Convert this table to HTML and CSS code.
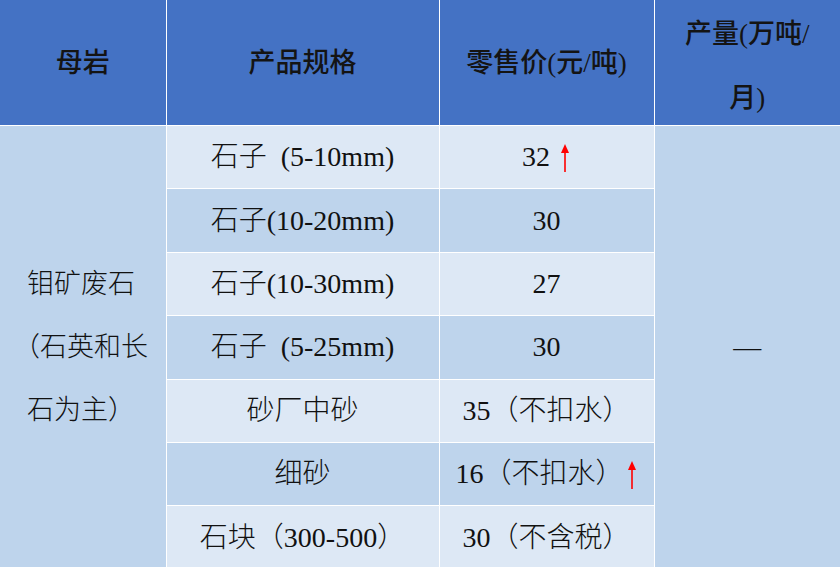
FILE: index.html
```html
<!DOCTYPE html>
<html lang="zh-CN">
<head>
<meta charset="utf-8">
<title>钼矿废石价格</title>
<link rel="stylesheet" href="styles.css">
</head>
<body>
<table class="price-table">
  <colgroup>
    <col class="c1"><col class="c2"><col class="c3"><col class="c4">
  </colgroup>
  <thead>
    <tr>
      <th>母岩</th>
      <th>产品规格</th>
      <th>零售价(元/吨)</th>
      <th class="two-line"><div class="two-line-text">产量(万吨/<br>月)</div></th>
    </tr>
  </thead>
  <tbody>
    <tr class="light">
      <td class="rock" rowspan="7">钼矿废石<br><span class="lead-paren">（</span>石英和长<br>石为主）</td>
      <td>石子&nbsp;&nbsp;(5-10mm)</td>
      <td>32 <svg class="up" width="12" height="28" viewBox="0 0 12 28"><path d="M6 0 L2 9 L10 9 Z" fill="#ff0000"/><line x1="6" y1="7" x2="6" y2="28" stroke="#ff0000" stroke-width="1.6"/></svg></td>
      <td class="output" rowspan="7">—</td>
    </tr>
    <tr class="dark">
      <td>石子(10-20mm)</td>
      <td>30</td>
    </tr>
    <tr class="light">
      <td>石子(10-30mm)</td>
      <td>27</td>
    </tr>
    <tr class="dark">
      <td>石子&nbsp;&nbsp;(5-25mm)</td>
      <td>30</td>
    </tr>
    <tr class="light">
      <td>砂厂中砂</td>
      <td>35（不扣水）</td>
    </tr>
    <tr class="dark">
      <td>细砂</td>
      <td>16（不扣水）<svg class="up" width="12" height="28" viewBox="0 0 12 28"><path d="M6 0 L2 9 L10 9 Z" fill="#ff0000"/><line x1="6" y1="7" x2="6" y2="28" stroke="#ff0000" stroke-width="1.6"/></svg></td>
    </tr>
    <tr class="light">
      <td>石块（300-500）</td>
      <td>30（不含税）</td>
    </tr>
  </tbody>
</table>
</body>
</html>
```
FILE: styles.css
```css
html, body {
  margin: 0;
  padding: 0;
  background: #ffffff;
}

.price-table {
  width: 840px;
  table-layout: fixed;
  border-collapse: collapse;
  font-family: "Liberation Serif", "Noto Sans CJK SC", serif;
  font-size: 28px;
  color: #111111;
}

.c1 { width: 166px; }
.c2 { width: 273px; }
.c3 { width: 215px; }
.c4 { width: 186px; }

.price-table th,
.price-table td {
  border: 1px solid #ffffff;
  padding: 0;
  text-align: center;
  vertical-align: middle;
}

.price-table tr > :first-child { border-left: none; }
.price-table tr > :last-child { border-right: none; }
.price-table thead th { border-top: none; }

.price-table thead th {
  background: #4472c4;
  height: 123px;
  font-weight: 500;
  font-size: 27px;
  color: #141414;
  line-height: 40px;
}

.two-line-text {
  line-height: 64px;
  height: 123px;
  margin-top: 2px;
  overflow: visible;
}

.price-table tbody td {
  height: 62.4px;
  line-height: 40px;
  font-weight: 300;
}

.light td { background: #dde8f5; }
.dark td { background: #bed4ec; }

.price-table td.rock,
.price-table td.output {
  background: #bed4ec;
}

.price-table td.rock {
  text-align: left;
  padding-left: 27px;
  line-height: 63px;
  white-space: nowrap;
  font-size: 27px;
}

.lead-paren {
  margin-left: -14px;
}

.up {
  display: inline-block;
  vertical-align: -6px;
  margin-left: 2px;
}
```
